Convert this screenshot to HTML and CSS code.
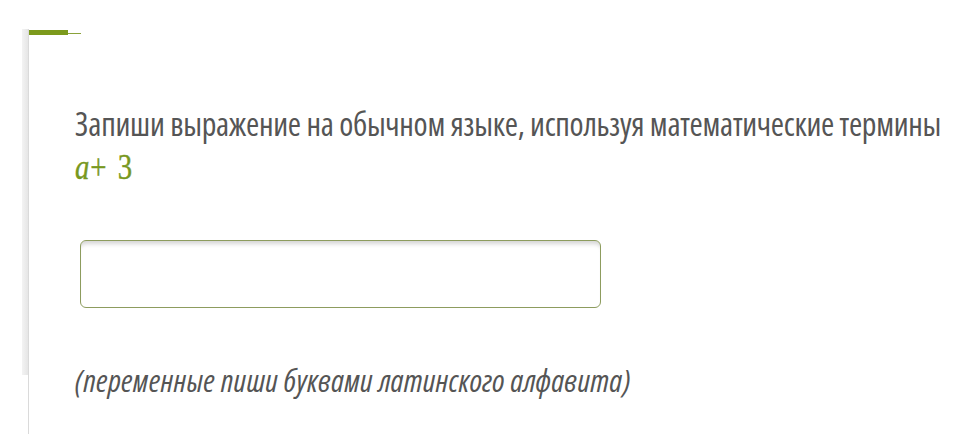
FILE: index.html
```html
<!DOCTYPE html>
<html lang="ru">
<head>
<meta charset="utf-8">
<link rel="stylesheet" href="styles.css">
</head>
<body>
<div class="frame">
  <div class="rail"></div>
  <div class="card">
    <div class="accent"><span class="accent-bar"></span><span class="accent-line"></span></div>
    <div class="content">
      <p class="question">Запиши выражение на обычном языке, используя математические термины</p>
      <p class="math"><span class="math-inner"><i class="var">a</i><span class="plus">+</span><span class="num">3</span></span></p>
      <div class="answer"></div>
      <p class="hint">(переменные пиши буквами латинского алфавита)</p>
    </div>
  </div>
</div>
</body>
</html>
```
FILE: styles.css
```css
html, body { margin: 0; padding: 0; background: #fff; }
body { width: 974px; height: 434px; overflow: hidden; }
.frame {
  display: flex;
  padding: 29px 0 0 22px;
  height: 405px;
}
.rail {
  width: 6px;
  height: 346px;
  background: linear-gradient(to right, #f3f3f3, #e6e6e6);
}
.card {
  flex: 1;
  border-left: 1px solid #dadada;
}
.accent { display: flex; align-items: flex-end; height: 6px; }
.accent-bar { width: 39px; height: 5px; background: #7c9a1c; }
.accent-line { width: 13px; height: 1px; margin-bottom: 1px; background: #8aa23a; }
.content { padding-left: 46px; }
.question {
  margin: 71px 0 0;
  font-family: "Open Sans", sans-serif;
  font-stretch: 75%;
  font-size: 32px;
  letter-spacing: -0.3px;
  line-height: 36px;
  color: #555;
  white-space: nowrap;
}
.math {
  margin: 5px 0 0;
  height: 40px;
  font-family: "Liberation Serif", serif;
  font-size: 36px;
  line-height: 40px;
  color: #78981e;
}
.math-inner {
  display: inline-block;
  transform: scaleX(0.8);
  transform-origin: left center;
  -webkit-text-stroke: 0.4px #78981e;
}
.var { font-style: italic; }
.plus { margin: 0 14px 0 1px; }
.answer {
  margin: 53px 0 0 5px;
  width: 521px;
  height: 68px;
  box-sizing: border-box;
  border: 1px solid #8d9c5e;
  border-radius: 6px;
  box-shadow: inset 0 6px 4px -3px #d6d6d6;
  background: #fff;
}
.hint {
  margin: 54px 0 0;
  font-family: "Open Sans", sans-serif;
  font-stretch: 75%;
  font-style: italic;
  font-size: 31px;
  letter-spacing: 0.25px;
  line-height: 36px;
  color: #555;
  white-space: nowrap;
}
```
